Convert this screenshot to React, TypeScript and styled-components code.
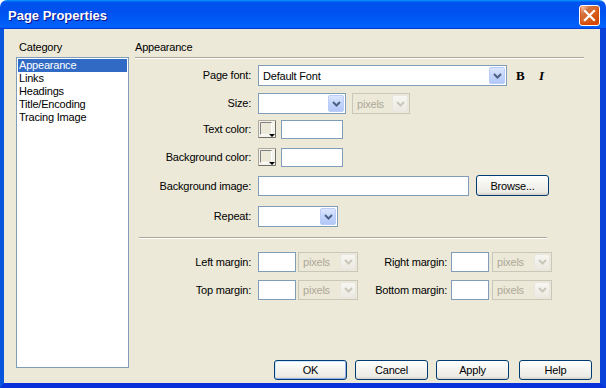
import styled, { createGlobalStyle } from 'styled-components';

const GlobalStyle = createGlobalStyle`
  html, body {
    margin: 0;
    padding: 0;
    background: #fff;
  }
  body {
    font-family: "Liberation Sans", Arial, sans-serif;
    font-size: 11px;
    color: #000;
  }
`;

const categories = ['Appearance', 'Links', 'Headings', 'Title/Encoding', 'Tracing Image'];

const Chevron = ({ color }: { color: string }) => (
  <svg width="9" height="6" viewBox="0 0 9 6">
    <path d="M1 1 L4.5 4.5 L8 1" fill="none" stroke={color} strokeWidth="2" />
  </svg>
);

const Select = ({ width, height = 21, value, disabled }: { width: number; height?: number; value?: string; disabled?: boolean }) => (
  <SelectBox $w={width} $h={height} $disabled={disabled}>
    <SelectValue $disabled={disabled}>{value}</SelectValue>
    <ArrowButton $disabled={disabled}>
      <Chevron color={disabled ? '#C9C7BA' : '#4D6185'} />
    </ArrowButton>
  </SelectBox>
);

const ColorSwatch = () => (
  <SwatchWrap>
    <svg width="18" height="18" viewBox="0 0 18 18">
      <rect x="0" y="0" width="18" height="18" fill="#F4F3EE" />
      <path d="M0.5 17.5 V0.5 H17.5" fill="none" stroke="#ACA899" />
      <path d="M0.5 17.5 H17.5 V0.5" fill="none" stroke="#716F64" />
      <rect x="2.5" y="2.5" width="11" height="12" fill="#ECE9D8" stroke="#FFFFFF" />
      <path d="M2.5 14.5 V2.5 H13.5" fill="none" stroke="#808080" />
      <path d="M11 14 H17 L14 17 Z" fill="#000" />
    </svg>
  </SwatchWrap>
);

const CloseIcon = () => (
  <svg width="21" height="21" viewBox="0 0 21 21">
    <path d="M6 6 L15 15 M15 6 L6 15" stroke="#fff" strokeWidth="2.2" strokeLinecap="square" />
  </svg>
);

export default function App() {
  return (
    <>
      <GlobalStyle />
      <Window>
        <TitleBar>
          <Title>Page Properties</Title>
          <CloseButton>
            <CloseIcon />
          </CloseButton>
        </TitleBar>

        <Body>
          <LeftCol>
            <CategoryLabel>Category</CategoryLabel>
            <ListBox>
              {categories.map((c, i) => (
                <ListItem key={c} $selected={i === 0}>{c}</ListItem>
              ))}
            </ListBox>
          </LeftCol>

          <RightCol>
            <Panel>
              <SectionTitle>Appearance</SectionTitle>
              <Rule />

              <FormRow $h={28} $top={6}>
                <Label $h={21}>Page font:</Label>
                <Select width={249} value="Default Font" />
                <StyleGlyph $ml={9}>B</StyleGlyph>
                <StyleGlyph $ml={14} $italic>I</StyleGlyph>
              </FormRow>

              <FormRow $h={27}>
                <Label $h={21}>Size:</Label>
                <Select width={88} />
                <Spacer $w={6} />
                <Select width={58} value="pixels" disabled />
              </FormRow>

              <FormRow $h={28}>
                <Label $h={19}>Text color:</Label>
                <ColorSwatch />
                <TextBox $w={62} $h={19} $ml={5} />
              </FormRow>

              <FormRow $h={28}>
                <Label $h={19}>Background color:</Label>
                <ColorSwatch />
                <TextBox $w={62} $h={19} $ml={5} />
              </FormRow>

              <FormRow $h={30}>
                <Label $h={20}>Background image:</Label>
                <TextBox $w={211} $h={20} />
                <BrowseButton>Browse...</BrowseButton>
              </FormRow>

              <FormRow $h={21}>
                <Label $h={21}>Repeat:</Label>
                <Select width={80} />
              </FormRow>

              <InnerRule />

              <FormRow $h={28} $top={13}>
                <Label $h={20}>Left margin:</Label>
                <TextBox $w={38} $h={20} />
                <Spacer $w={2} />
                <Select width={60} height={20} value="pixels" disabled />
                <Label $h={20} $w={89} $gap={4}>Right margin:</Label>
                <TextBox $w={38} $h={20} />
                <Spacer $w={3} />
                <Select width={60} height={20} value="pixels" disabled />
              </FormRow>

              <FormRow $h={20}>
                <Label $h={20}>Top margin:</Label>
                <TextBox $w={38} $h={20} />
                <Spacer $w={2} />
                <Select width={60} height={20} value="pixels" disabled />
                <Label $h={20} $w={89} $gap={4}>Bottom margin:</Label>
                <TextBox $w={38} $h={20} />
                <Spacer $w={3} />
                <Select width={60} height={20} value="pixels" disabled />
              </FormRow>
            </Panel>

            <ButtonRow>
              <DialogButton $default>OK</DialogButton>
              <DialogButton>Cancel</DialogButton>
              <DialogButton>Apply</DialogButton>
              <HelpButton>Help</HelpButton>
            </ButtonRow>
          </RightCol>
        </Body>
      </Window>
    </>
  );
}

const Window = styled.div`
  width: 606px;
  height: 388px;
  display: flex;
  flex-direction: column;
  overflow: hidden;
`;

const TitleBar = styled.div`
  flex: none;
  height: 29px;
  box-sizing: border-box;
  display: flex;
  align-items: flex-start;
  justify-content: space-between;
  padding: 5px 6px 0 8px;
  border-radius: 7px 7px 0 0;
  background: linear-gradient(180deg, #0997ff, #0053ee 8%, #0050ee 40%, #0060fa 88%, #0062fc 93%, #005bff 95%, #003dd7 96%, #003dd7);
`;

const Title = styled.div`
  font-family: "Liberation Sans", Arial, sans-serif;
  font-weight: bold;
  font-size: 13px;
  line-height: 21px;
  color: #fff;
  text-shadow: 1px 1px #0f1089;
`;

const CloseButton = styled.div`
  width: 21px;
  height: 21px;
  box-sizing: border-box;
  border: 1px solid #fff;
  border-radius: 3px;
  display: flex;
  align-items: center;
  justify-content: center;
  background: radial-gradient(circle at 90% 90%, #cc4600 0, #dc6527 55%, #cd7546 70%, #ffccb2 90%, #fff 100%);
  box-shadow: inset 0 -1px 2px 1px #da4600;

  svg {
    margin: -1px;
  }
`;

const Body = styled.div`
  flex: 1;
  display: flex;
  background: #ece9d8;
  border-left: 4px solid #0855dd;
  border-right: 6px solid #0842d9;
  border-bottom: 5px solid #0831d9;
  padding: 12px 0 0 12px;
  letter-spacing: -0.2px;
`;

const LeftCol = styled.div`
  width: 113px;
  display: flex;
  flex-direction: column;
  margin-bottom: 15px;
`;

const CategoryLabel = styled.div`
  height: 13px;
  line-height: 13px;
  padding-left: 3px;
  margin-bottom: 3px;
`;

const ListBox = styled.div`
  flex: 1;
  border: 1px solid #7f9db9;
  background: #fff;
  padding: 1px;
`;

const ListItem = styled.div<{ $selected?: boolean }>`
  height: 13px;
  line-height: 13px;
  padding-left: 1px;
  background: ${(p) => (p.$selected ? '#316ac5' : 'transparent')};
  color: ${(p) => (p.$selected ? '#fff' : '#000')};
`;

const RightCol = styled.div`
  flex: 1;
  margin-left: 6px;
  display: flex;
  flex-direction: column;
`;

const Panel = styled.div`
  margin-right: 16px;
`;

const SectionTitle = styled.div`
  height: 13px;
  line-height: 13px;
`;

const Rule = styled.div`
  margin-top: 3px;
  border-top: 1px solid #aca899;
  border-bottom: 1px solid #fff;
`;

const InnerRule = styled(Rule)`
  margin: 10px 37px 0 4px;
`;

const FormRow = styled.div<{ $h: number; $top?: number }>`
  display: flex;
  align-items: flex-start;
  height: ${(p) => p.$h}px;
  margin-top: ${(p) => p.$top ?? 0}px;
`;

const Label = styled.div<{ $h: number; $w?: number; $gap?: number }>`
  width: ${(p) => p.$w ?? 116}px;
  margin-right: ${(p) => p.$gap ?? 7}px;
  text-align: right;
  white-space: nowrap;
  height: ${(p) => p.$h}px;
  line-height: ${(p) => p.$h}px;
`;

const Spacer = styled.div<{ $w: number }>`
  width: ${(p) => p.$w}px;
  flex: none;
`;

const SelectBox = styled.div<{ $w: number; $h: number; $disabled?: boolean }>`
  width: ${(p) => p.$w}px;
  height: ${(p) => p.$h}px;
  box-sizing: border-box;
  flex: none;
  display: flex;
  padding: 1px;
  border: 1px solid ${(p) => (p.$disabled ? '#c9c7ba' : '#7f9db9')};
  background: ${(p) => (p.$disabled ? '#ece9d8' : '#fff')};
`;

const SelectValue = styled.div<{ $disabled?: boolean }>`
  flex: 1;
  padding-left: 3px;
  overflow: hidden;
  white-space: nowrap;
  display: flex;
  align-items: center;
  color: ${(p) => (p.$disabled ? '#aca899' : '#000')};
`;

const ArrowButton = styled.div<{ $disabled?: boolean }>`
  width: 16px;
  box-sizing: border-box;
  display: flex;
  align-items: center;
  justify-content: center;
  border-radius: 2px;
  border: 1px solid ${(p) => (p.$disabled ? '#e8e6dd' : '#b9cdf8')};
  background: ${(p) =>
    p.$disabled
      ? 'linear-gradient(180deg, #f7f6f2, #ebe9e1)'
      : 'linear-gradient(180deg, #dce6fd 0%, #c5d6fc 45%, #b2c8f7 100%)'};
`;

const TextBox = styled.div<{ $w: number; $h: number; $ml?: number }>`
  width: ${(p) => p.$w}px;
  height: ${(p) => p.$h}px;
  margin-left: ${(p) => p.$ml ?? 0}px;
  box-sizing: border-box;
  flex: none;
  border: 1px solid #7f9db9;
  background: #fff;
`;

const SwatchWrap = styled.div`
  width: 18px;
  height: 18px;
  flex: none;
  svg {
    display: block;
  }
`;

const StyleGlyph = styled.div<{ $ml: number; $italic?: boolean }>`
  margin-left: ${(p) => p.$ml}px;
  font-family: "Liberation Serif", "Times New Roman", serif;
  font-weight: bold;
  font-style: ${(p) => (p.$italic ? 'italic' : 'normal')};
  font-size: 13px;
  line-height: 21px;
  width: 9px;
`;

const XpButton = styled.div`
  box-sizing: border-box;
  flex: none;
  display: flex;
  align-items: center;
  justify-content: center;
  border: 1px solid #003c74;
  border-radius: 3px;
  background: linear-gradient(180deg, #fff 0%, #f5f5f1 40%, #ecebe6 85%, #d6d0c5 100%);
`;

const BrowseButton = styled(XpButton)`
  width: 73px;
  height: 21px;
  margin: -1px 0 0 7px;
`;

const ButtonRow = styled.div`
  margin-top: auto;
  margin-right: 8px;
  margin-bottom: 3px;
  display: flex;
  justify-content: flex-end;
  gap: 8px;
`;

const DialogButton = styled(XpButton)<{ $default?: boolean }>`
  width: 73px;
  height: 20px;
  box-shadow: ${(p) => (p.$default ? 'inset -1px -1px #99b1ea, inset 1px 1px #cee7ff' : 'none')};
`;

const HelpButton = styled(DialogButton)`
  margin-left: 2px;
`;
